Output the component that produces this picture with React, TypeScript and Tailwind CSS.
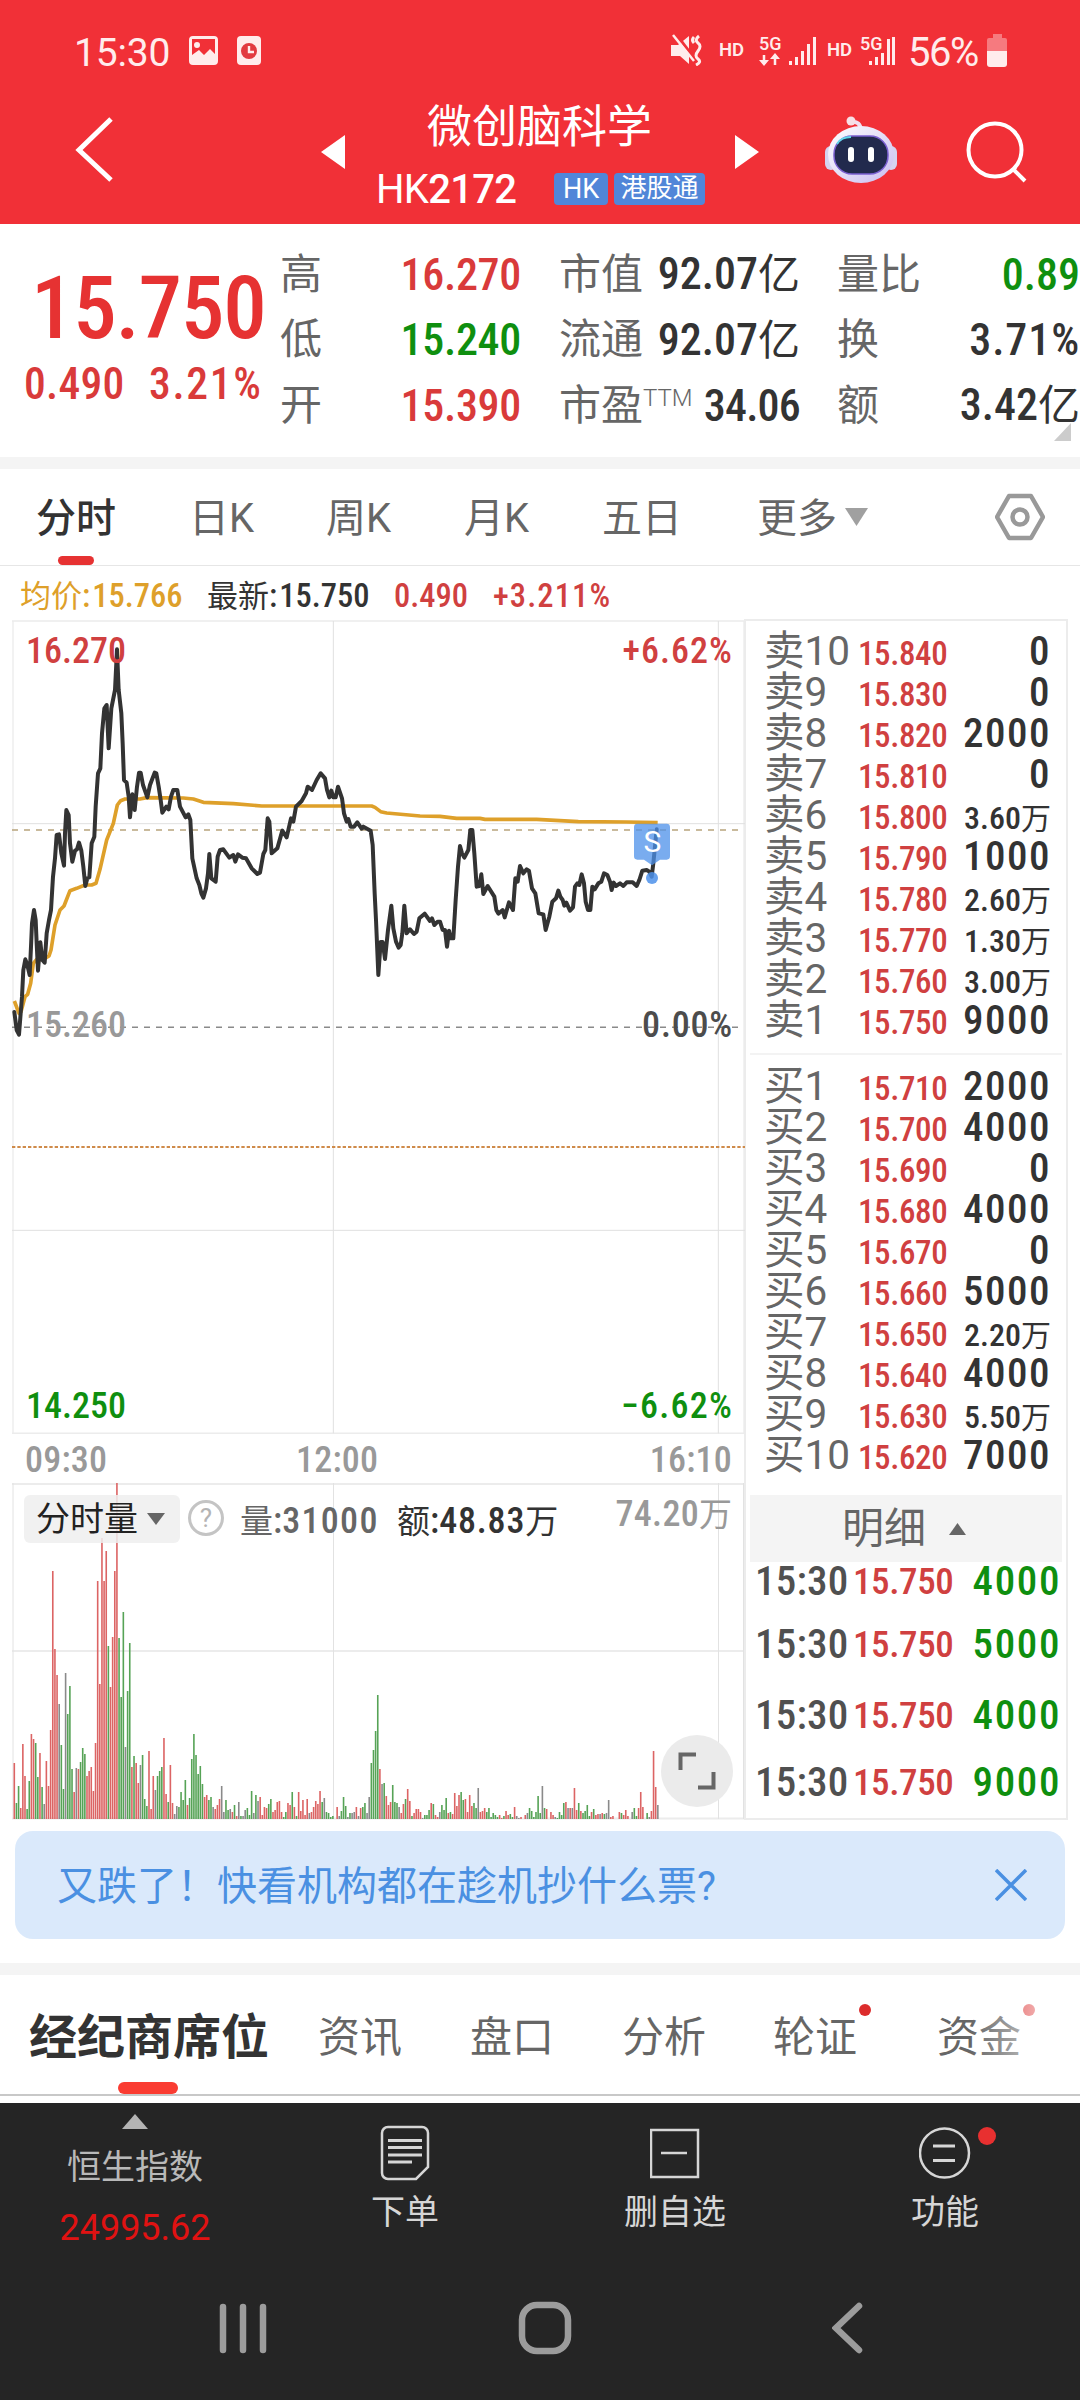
import React from 'react'

const red = 'text-[#d93a3a]'
const green = 'text-[#0f8f0f]'
const dark = 'text-[#333333]'

const quoteColumns = [
  {
    box: 'w-[241px] ml-[280px]',
    rows: [
      { label: '高', value: '16.270', color: red, fit: '-tracking-[0.3px]' },
      { label: '低', value: '15.240', color: green, fit: '-tracking-[0.3px]' },
      { label: '开', value: '15.390', color: red, fit: '-tracking-[0.3px]' }
    ]
  },
  {
    box: 'w-[241px] ml-[38px]',
    rows: [
      { label: '市值', value: '92.07亿', color: dark, fit: '' },
      { label: '流通', value: '92.07亿', color: dark, fit: '' },
      { label: '市盈', sup: 'TTM', value: '34.06', color: dark, fit: '-tracking-[0.8px]' }
    ]
  },
  {
    box: 'w-[243px] ml-[37px]',
    rows: [
      { label: '量比', value: '0.89', color: green, fit: '' },
      { label: '换', value: '3.71%', color: dark, fit: 'tracking-[0.9px]' },
      { label: '额', value: '3.42亿', color: dark, fit: '' }
    ]
  }
]

const sells = [
  ['卖10', '15.840', '0'],
  ['卖9', '15.830', '0'],
  ['卖8', '15.820', '2000'],
  ['卖7', '15.810', '0'],
  ['卖6', '15.800', '3.60万'],
  ['卖5', '15.790', '1000'],
  ['卖4', '15.780', '2.60万'],
  ['卖3', '15.770', '1.30万'],
  ['卖2', '15.760', '3.00万'],
  ['卖1', '15.750', '9000']
]

const buys = [
  ['买1', '15.710', '2000'],
  ['买2', '15.700', '4000'],
  ['买3', '15.690', '0'],
  ['买4', '15.680', '4000'],
  ['买5', '15.670', '0'],
  ['买6', '15.660', '5000'],
  ['买7', '15.650', '2.20万'],
  ['买8', '15.640', '4000'],
  ['买9', '15.630', '5.50万'],
  ['买10', '15.620', '7000']
]

const trades = [
  { time: '15:30', price: '15.750', volume: '4000', row: 'h-[38px]' },
  { time: '15:30', price: '15.750', volume: '5000', row: 'h-[88px]' },
  { time: '15:30', price: '15.750', volume: '4000', row: 'h-[53px]' },
  { time: '15:30', price: '15.750', volume: '9000', row: 'h-[82px]' }
]

// Plot units are a third of a pixel, both lines share the same viewBox
const priceLine =
  '43,1236 50,1290 57,1304 62,1240 66,1190 70,1110 76,1078 82,1095 89,1125 93,1040 96,970 102,930 107,960 110,1030 114,1112 121,1027 127,1080 134,1088 140,1000 147,960 153,930 159,830 165,775 170,705 177,703 184,760 192,797 195,700 199,630 206,645 210,730 217,785 225,752 231,748 237,728 244,752 250,800 256,858 262,835 268,832 275,730 283,710 287,620 294,520 301,505 306,400 313,325 320,315 326,445 334,325 345,270 351,148 356,270 364,340 368,430 372,540 380,548 386,590 390,652 397,583 404,630 411,560 417,518 422,518 429,555 442,592 450,555 464,518 469,520 476,560 482,600 487,638 499,620 506,628 513,590 520,570 532,570 540,620 557,652 565,643 571,660 577,775 590,835 598,855 604,880 610,893 618,865 624,820 628,762 634,835 647,845 653,770 660,750 670,748 688,773 700,765 706,785 714,763 727,773 738,775 755,805 772,822 780,818 790,762 796,750 803,655 808,665 815,760 832,745 847,692 860,712 873,655 880,665 888,620 905,603 918,580 923,560 936,570 950,540 962,520 975,535 981,570 988,592 994,572 1000,592 1007,592 1014,560 1026,595 1032,640 1040,665 1045,657 1052,680 1062,680 1072,667 1085,686 1090,680 1112,692 1118,735 1124,880 1128,960 1135,1125 1142,1026 1148,1026 1155,1077 1164,990 1174,917 1180,985 1188,1025 1196,1043 1202,1035 1207,1000 1213,917 1220,1000 1230,988 1242,1002 1250,995 1258,955 1274,941 1290,963 1296,955 1303,975 1313,965 1320,965 1328,990 1335,990 1341,1040 1347,992 1352,1015 1360,1015 1367,900 1374,800 1380,738 1386,760 1393,773 1405,750 1411,690 1417,690 1423,760 1430,860 1438,858 1444,823 1450,882 1463,858 1483,890 1489,930 1495,941 1508,930 1514,952 1527,907 1539,930 1546,835 1553,845 1560,798 1570,820 1580,808 1587,813 1596,865 1606,880 1616,940 1630,943 1637,990 1648,950 1657,905 1668,895 1675,872 1681,890 1688,900 1693,917 1699,908 1710,932 1719,922 1725,860 1732,850 1738,855 1745,823 1752,850 1757,905 1764,930 1771,930 1777,860 1784,868 1795,850 1804,845 1812,820 1822,825 1830,845 1835,870 1841,848 1848,858 1860,850 1870,858 1880,847 1898,847 1910,858 1918,840 1927,812 1940,810 1948,815 1955,830 1960,790 1970,688'

const averageLine =
  '43,1203 57,1240 63,1235 75,1190 83,1183 92,1150 100,1090 110,1078 130,1078 147,1068 153,1050 165,975 180,930 192,918 210,872 230,865 255,855 275,855 288,850 300,808 320,720 340,670 352,615 362,602 375,597 420,597 440,593 550,594 580,597 610,607 700,611 785,618 1115,618 1125,622 1142,635 1160,639 1260,648 1320,649 1370,655 1440,655 1455,658 1610,658 1735,665 1880,666 1973,668'

// One entry per minute: height in px and colour (r up, g down, n flat)
const volumes =
  '56r 16g 33g 11r 75r 43r 10g 38g 85r 80r 76g 42g 66r 32g 15n 58r 33r 89r 248r 170r 144r 115n 74g 30g 146n 105g 133g 50g 27r 51n 50r 57g 71g 65g 43r 48r 52r 28r 76r 238r 135r 281r 238r 268r 173g 132r 182r 248r 336r 181g 122g 207g 72n 128g 176g 52r 63g 56r 36r 54n 64g 20g 13g 68r 10r 43r 29n 43g 48g 52g 81r 25r 17g 54r 16r 5n 13n 12g 27g 19g 39g 14r 21g 60g 85g 64g 45g 53g 35g 22r 24r 19g 22g 12n 10r 14r 20r 33n 7n 19g 9g 10n 7r 14g 3r 17n 3g 3n 9n 11g 4g 28g 6n 24g 18n 22r 4r 12r 11r 15g 20g 7r 9r 17r 18r 7r 2g 7g 16r 14r 27g 12r 3g 27r 8r 19r 4r 20r 6n 7r 12r 18r 15r 28r 17g 21n 7g 6g 2g 3g 0n 12r 3n 8g 22g 13g 2n 6g 6n 7n 12r 3n 11r 12g 16g 6n 22n 56g 69g 88g 124g 50r 35n 36g 23r 14r 17r 34g 17g 16g 12n 6r 15r 20g 30r 18r 3g 6r 10r 10r 7r 1n 4g 4g 9g 16r 15g 4r 2r 7n 14g 9g 21g 6r 7g 5r 26r 13r 24r 27g 19g 20r 7r 24r 13r 16g 11g 31n 7r 8r 11r 7g 11g 2g 6g 4g 2g 4r 1r 3g 8r 4r 5g 2g 12r 3n 1n 2r 0n 4r 6n 11g 8g 2g 7g 23g 6g 33n 11g 10r 0n 7r 4r 2n 1g 7g 4g 16g 17r 11n 11r 11n 31r 9r 16g 8r 6g 8g 14g 3g 7r 10g 4r 5r 5n 6r 5g 6n 19n 2r 3r 0n 0n 7r 6g 4r 9r 3r 0n 7n 11g 3g 11r 27r 12r 0n 6g 2n 8r 68r 32r 14n'

const barFill: Record<string, string> = {
  r: '#dc6464',
  g: '#56a356',
  n: '#8a8a8a'
}

const StatusBar = () => (
  <div className="h-[102px] flex items-start pt-[31px] pl-[74px] text-[#ffecec]">
    <span className="text-[39px] leading-[44px] w-[115px] -tracking-[0.2px]">15:30</span>
    <svg className="mt-[5px]" width="29" height="29" viewBox="0 0 29 29">
      <path fillRule="evenodd" fill="currentColor" d="M4 0h21a4 4 0 0 1 4 4v21a4 4 0 0 1-4 4H4a4 4 0 0 1-4-4V4a4 4 0 0 1 4-4zM3 3v16l7-5 5 5 6-6 5 5V3zM8 6a3 3 0 1 1 0 6 3 3 0 0 1 0-6z" />
    </svg>
    <svg className="mt-[5px] ml-[19px]" width="24" height="29" viewBox="0 0 24 29">
      <rect width="24" height="29" rx="4" fill="currentColor" />
      <circle cx="12" cy="15" r="8" fill="#e23a40" />
      <path d="M12 10v6h5" fill="none" stroke="#ffecec" strokeWidth="2.4" />
    </svg>
    <svg className="ml-[410px] mt-[3px]" width="32" height="32" viewBox="0 0 32 32" fill="none" stroke="currentColor">
      <path d="M0 11h7l11-9v28L9 22H0z" fill="currentColor" stroke="none" />
      <path d="M5 0l18 24" stroke="#f13037" strokeWidth="3" />
      <path d="M2 1l21 26" strokeWidth="2.5" />
      <path d="M23 3q-3 3 0 6M28 2q-5 4-1 7t0 8 0 8-2 6" strokeWidth="3" />
    </svg>
    <span className="ml-[16px] mt-[9px] w-[40px] text-[18.5px] leading-[20px] font-semibold">HD</span>
    <svg className="mt-[4px] overflow-visible" width="60" height="32" viewBox="0 0 60 32" fill="currentColor">
      <text x="0" y="15" fontSize="18" fontWeight="500" fontFamily="Roboto">5G</text>
      <path d="M5 20v9M16 21v9" stroke="currentColor" strokeWidth="2.5" />
      <path d="M0 25h10l-5 6zM11 24h10l-5-6z" />
      <path d="M30 26h3v4h-3zM36 22h3v8h-3zM42 16h3v14h-3zM48 9h3v21h-3zM54 2h3v28h-3z" />
    </svg>
    <span className="ml-[8px] mt-[9px] w-[33px] text-[18.5px] leading-[20px] font-semibold">HD</span>
    <svg className="mt-[4px] overflow-visible" width="38" height="32" viewBox="0 0 38 32" fill="currentColor">
      <text x="0" y="15" fontSize="18" fontWeight="500" fontFamily="Roboto">5G</text>
      <path d="M9 26h3v4H9zM15 22h3v8h-3zM21 18h3v12h-3zM27 4h3v26h-3zM32 2h3v28h-3z" />
    </svg>
    <span className="ml-[10px] text-[40px] leading-[44px] w-[79px] -tracking-[1.5px]">56%</span>
    <svg className="mt-[3px]" width="20" height="33" viewBox="0 0 20 33" fill="#ffecec">
      <path opacity=".4" d="M6 0h9v4h3a2 2 0 0 1 2 2v11H0V6a2 2 0 0 1 2-2h4z" />
      <path d="M0 17h20v13a3 3 0 0 1-3 3H3a3 3 0 0 1-3-3z" />
    </svg>
  </div>
)

const RobotIcon = () => (
  <svg className="ml-[66px] mt-[14px]" width="72" height="68" viewBox="0 0 72 68">
    <defs>
      <linearGradient id="shell" x1="0" y1="0" x2="1" y2="1">
        <stop offset="0" stopColor="#ffffff" />
        <stop offset="1" stopColor="#c9bdf0" />
      </linearGradient>
    </defs>
    <path d="M36 14Q35 5 27 6" fill="none" stroke="#f1dff0" strokeWidth="4" />
    <circle cx="26" cy="5" r="4.5" fill="#f7dfe6" />
    <rect x="0" y="30" width="12" height="24" rx="6" fill="#d5d3f0" />
    <rect x="60" y="30" width="12" height="24" rx="6" fill="#d5d3f0" />
    <ellipse cx="36" cy="38.500" rx="33" ry="28.500" fill="url(#shell)" />
    <rect x="9" y="20" width="54" height="38" rx="18" fill="#222a4d" stroke="#7a5fd0" strokeWidth="1.5" />
    <path d="M12 28Q16 21 26 21" stroke="#5fd6e8" strokeWidth="2" fill="none" />
    <rect x="23" y="31" width="6" height="15" rx="3" fill="#fff" />
    <rect x="43" y="31" width="6" height="15" rx="3" fill="#fff" />
  </svg>
)

const Header = () => (
  <div className="h-[122px] flex items-start text-white">
    <svg className="ml-[74px] mt-[15px]" width="40" height="66" viewBox="0 0 40 66" fill="none" stroke="#fff" strokeWidth="5">
      <path d="M37 2L5 33l32 30" />
    </svg>
    <svg className="ml-[207px] mt-[33px]" width="24" height="34" viewBox="0 0 24 34" fill="#fff">
      <path d="M24 0v34L0 17z" />
    </svg>
    <div className="w-[390px]">
      <div className="text-[45px] leading-[52px] text-center -ml-[1px]">微创脑科学</div>
      <div className="flex items-center h-[34px] mt-[18px] pl-[31px] gap-1.5">
        <span className="text-[40px] leading-[36px] w-[172px] -tracking-[0.7px] pt-[1px]">
          HK<span className="font-medium">2172</span>
        </span>
        <span className="h-[32px] w-[54px] rounded-sm bg-[#5186d8] text-[27px] leading-[32px] text-center">HK</span>
        <span className="h-[32px] w-[91px] rounded-sm bg-[#5186d8] text-[26px] leading-[31px] text-center">港股通</span>
      </div>
    </div>
    <svg className="mt-[33px]" width="24" height="34" viewBox="0 0 24 34" fill="#fff">
      <path d="M0 0v34l24-17z" />
    </svg>
    <RobotIcon />
    <svg className="ml-[68px] mt-[18px]" width="64" height="64" viewBox="0 0 64 64" fill="none" stroke="#fff" strokeWidth="4">
      <circle cx="30" cy="30" r="26.500" />
      <path d="M48 49l12 12" />
    </svg>
  </div>
)

const Quote = () => (
  <div className="relative h-[233px] flex pt-[18px]">
    <div className="absolute left-[31px] top-[32px] font-['Roboto_Condensed'] font-medium text-[87px] leading-[104px] -tracking-[1.2px] text-[#e63232]">15.750</div>
    <div className="absolute left-[24px] top-[136px] flex font-['Roboto_Condensed'] font-medium text-[43.5px] leading-[50px] text-[#d93a3a]">
      <span className="w-[125px] tracking-[0.3px]">0.490</span>
      <span className="tracking-[1.7px]">3.21%</span>
    </div>
    {quoteColumns.map((col, i) => (
      <div key={i} className={`${col.box} shrink-0`}>
        {col.rows.map((row) => (
          <div key={row.label} className="h-[65.5px] flex items-center justify-between whitespace-nowrap">
            <span className="text-[42px] leading-[50px] text-[#666666]">
              {row.label}
              {row.sup && <sup className="text-[24px] font-light -top-[14px] leading-none">{row.sup}</sup>}
            </span>
            <span className={`font-['Roboto_Condensed','Noto_Sans_CJK_SC'] text-[44px] leading-[50px] font-medium ${row.color} ${row.fit}`}>
              {row.value.replace('亿', '')}
              {row.value.includes('亿') && <span className="text-[42px] font-normal">亿</span>}
            </span>
          </div>
        ))}
      </div>
    ))}
    <svg className="absolute left-[1054px] top-[199px]" width="17" height="18" viewBox="0 0 17 18" fill="#cccccc">
      <path d="M17 0v18H0z" />
    </svg>
  </div>
)

const PeriodTabs = () => (
  <div className="relative h-[97px] flex border-b border-[#e6e6e6] text-[40px] leading-[99px] text-[#666666]">
    <span className="ml-[36px] w-[153px] font-medium text-[#333333]">分时</span>
    <span className="w-[137px]">日K</span>
    <span className="w-[138px]">周K</span>
    <span className="w-[138px]">月K</span>
    <span className="w-[155px]">五日</span>
    <span>更多</span>
    <svg className="ml-[8px] mt-[39px]" width="23" height="18" viewBox="0 0 23 18" fill="#a0a0a0">
      <path d="M0 0h23L11.500 18z" />
    </svg>
    <svg className="ml-[127px] mt-[24px]" width="50" height="48" viewBox="0 0 50 48" fill="none" stroke="#999" strokeWidth="4.500" strokeLinejoin="round">
      <path d="M14 3h22l12 21-12 21H14L2 24z" />
      <circle cx="25" cy="24" r="7.500" />
    </svg>
    <div className="absolute left-[58px] bottom-0 w-[36px] h-[9px] rounded-full bg-[#e63232]"></div>
  </div>
)

const PriceChart = () => (
  <div className="relative h-[814px]">
    <svg className="block" width="733" height="814" viewBox="36 60 2199 2442" fill="none">
      <g stroke="#ececec" strokeWidth="5">
        <path d="M36 63H2235M36 2500H2235" />
        <path d="M39 63V2500M2232 63V2500" strokeWidth="4" />
        <path d="M36 671H2235M36 1891H2235M1000 63V2500M2155 63V2500" stroke="#e0e0e0" strokeWidth="3" />
      </g>
      <path d="M36 690H2220" stroke="#b8a47c" strokeWidth="5" strokeDasharray="18 18" />
      <path d="M36 1282H2220" stroke="#8a8a8a" strokeWidth="4.500" strokeDasharray="18 18" />
      <path d="M36 1641H2235" stroke="#cf8b4a" strokeWidth="6" strokeDasharray="10 6" />
      <polyline points={averageLine} stroke="#dea02a" strokeWidth="11" strokeLinejoin="round" />
      <polyline points={priceLine} stroke="#333333" strokeWidth="12" strokeLinejoin="round" strokeLinecap="round" />
      <g fill="#4c90ea">
        <path opacity=".75" d="M1912 671h88a10 10 0 0 1 10 10v88a10 10 0 0 1-10 10h-20l-24 17-24-17h-20a10 10 0 0 1-10-10v-88a10 10 0 0 1 10-10z" />
        <circle opacity=".85" cx="1956" cy="834" r="18" />
      </g>
      <text x="1957" y="756" textAnchor="middle" fontFamily="Roboto" fontSize="90" fill="#fff">S</text>
    </svg>
    <div className="absolute inset-0 px-[14px] pr-[11px] font-['Roboto_Condensed'] font-medium text-[36px] leading-[40px]">
      <div className="flex justify-between pt-[11px] text-[#d04040]">
        <span>16.270</span>
        <span className="tracking-[1px]">+6.62%</span>
      </div>
      <div className="flex justify-between pt-[334px] text-[#4c4c4c]">
        <span className="text-[#999999]">15.260</span>
        <span className="tracking-[0.8px]">0.00%</span>
      </div>
      <div className="flex justify-between pt-[341px] text-[#0f8f0f]">
        <span>14.250</span>
        <span className="tracking-[1.2px]">−6.62%</span>
      </div>
    </div>
  </div>
)

const VolumeChart = () => (
  <div className="relative h-[337px]">
    <svg className="block" width="733" height="337" viewBox="0 0 733 337">
      <path d="M0 1H733M0 168H733M0 335.500H733" stroke="#ececec" strokeWidth="2" />
      <path d="M1 0V336M731.500 0V336M321.500 0V336M706.500 0V336" stroke="#e2e2e2" strokeWidth="1" />
      {volumes.split(' ').map((v, i) => {
        const h = parseInt(v)
        return <rect key={i} x={1.5 + i * 2.138} y={336 - h} width="1.6" height={h} fill={barFill[v.slice(-1)]} />
      })}
    </svg>
    <div className="absolute left-[12px] top-[12px] w-[156px] h-[48px] rounded-md bg-[#eeeeee]/85 flex items-center pl-[12px] text-[34px] leading-[50px] text-[#222222]">
      分时量
      <svg className="ml-[9px]" width="18" height="12" viewBox="0 0 18 12" fill="#666">
        <path d="M0 0h18L9 12z" />
      </svg>
    </div>
    <div className="absolute left-[176px] top-[17px] w-[36px] h-[36px] rounded-full border-[3px] border-[#c4c4c4] text-[#b4b4b4] text-[26px] leading-[31px] text-center">?</div>
    <div className="absolute left-[228px] top-[16px] flex font-['Roboto_Condensed','Noto_Sans_CJK_SC'] font-medium text-[36px] leading-[44px] text-[#666666]">
      <span className="w-[157px]">
        <span className="text-[33px] font-normal">量</span>:<span className="tracking-[1.3px]">31000</span>
      </span>
      <span className="text-[#333333]">
        <span className="text-[33px] font-normal">额</span>:<span className="tracking-[0.8px]">48.83</span>
        <span className="text-[33px] font-normal">万</span>
      </span>
    </div>
    <div className="absolute right-[12px] top-[9px] font-['Roboto_Condensed','Noto_Sans_CJK_SC'] font-medium text-[36px] leading-[44px] text-[#999999]">
      <span className="tracking-[0.3px]">74.20</span>
      <span className="text-[33px] font-normal">万</span>
    </div>
    <svg className="absolute left-[649px] top-[252px]" width="72" height="72" viewBox="0 0 72 72">
      <circle cx="36" cy="36" r="36" fill="#ebebeb" />
      <path d="M19.500 35V19.500H35M37 52.500h15.500V37" fill="none" stroke="#666" strokeWidth="4" />
    </svg>
  </div>
)

const BookRow = ({ row }: { row: string[] }) => (
  <div className="h-[41px] flex items-baseline leading-[41px] whitespace-nowrap">
    <span className="w-[94px] text-[40.5px] text-[#666666]">{row[0]}</span>
    <span className="font-['Roboto_Condensed'] font-medium text-[33px] -tracking-[0.4px] text-[#d04040]">{row[1]}</span>
    {row[2].includes('万') ? (
      <span className="ml-auto font-['Roboto_Condensed'] font-medium text-[32px] text-[#333333]">
        {row[2].replace('万', '')}
        <span className="font-['Noto_Sans_CJK_SC'] font-normal text-[30px] leading-none">万</span>
      </span>
    ) : (
      <span className="ml-auto font-['Roboto_Condensed'] font-medium text-[41px] tracking-[1.5px] text-[#333333]">{row[2]}</span>
    )}
  </div>
)

const OrderBook = () => (
  <div className="w-[324px] h-[1201px] -mt-[1px] border-2 border-[#ececec]">
    <div className="pt-[10px] pl-[18px] pr-[15px]">
      {sells.map((row) => (
        <BookRow key={row[0]} row={row} />
      ))}
    </div>
    <div className="mx-[4px] mt-[12px] h-[2px] bg-[#f3f3f3]"></div>
    <div className="pt-[11px] pl-[18px] pr-[15px]">
      {buys.map((row) => (
        <BookRow key={row[0]} row={row} />
      ))}
    </div>
    <div className="mx-[4px] mt-[19px] h-[67px] bg-[#f4f4f4] flex items-center pl-[92px] text-[42px] leading-[71px] text-[#666666]">
      明细
      <svg className="ml-[23px]" width="17" height="12" viewBox="0 0 17 12" fill="#666">
        <path d="M0 12h17L8.500 0z" />
      </svg>
    </div>
    {trades.map((t, i) => (
      <div key={i} className={`${t.row} flex items-center pl-[9px] pr-[5px] font-['Roboto_Condensed'] font-medium leading-[36px]`}>
        <span className="w-[98px] text-[41px] tracking-[0.2px] text-[#505050]">{t.time}</span>
        <span className="text-[37px] -tracking-[0.4px] pt-[2px] text-[#d04040]">{t.price}</span>
        <span className="ml-auto text-[41px] tracking-[1.6px] text-[#0f8f0f]">{t.volume}</span>
      </div>
    ))}
  </div>
)

const SectionTabs = () => (
  <div className="relative h-[121px] flex border-b-2 border-[#c8c8c8] text-[42px] leading-[125px] text-[#666666]">
    <span className="ml-[29px] w-[289px] text-[48px] font-bold text-[#333333]">经纪商席位</span>
    <span className="w-[152px]">资讯</span>
    <span className="w-[152px]">盘口</span>
    <span className="w-[151px]">分析</span>
    <span className="w-[164px] relative">
      轮证
      <i className="absolute left-[86px] top-[29px] w-[12px] h-[12px] rounded-full bg-[#dc2c2c]"></i>
    </span>
    <span className="relative">
      资金
      <i className="absolute left-[86px] top-[29px] w-[12px] h-[12px] rounded-full bg-[#dc2c2c]"></i>
    </span>
    <div className="absolute right-0 top-0 h-[110px] w-[110px] bg-gradient-to-r from-white/0 to-white"></div>
    <div className="absolute left-[118px] bottom-0 w-[60px] h-[12px] rounded-full bg-[#fa3c32]"></div>
  </div>
)

const BottomBar = () => (
  <div className="h-[297px] bg-[#252525] text-[#d6d6d6]">
    <div className="h-[170px] grid grid-cols-4 text-[34px] leading-[40px] text-center">
      <div className="text-[#b9b9b9]">
        <svg className="mx-auto mt-[11px]" width="26" height="15" viewBox="0 0 26 15" fill="#b4b4b4">
          <path d="M0 15h26L13 0z" />
        </svg>
        <div className="mt-[18px]">恒生指数</div>
        <div className="mt-[21px] text-[36px] text-[#e01212]">24995.62</div>
      </div>
      <div>
        <svg className="mx-auto mt-[22px]" width="50" height="56" viewBox="0 0 50 56" fill="none" stroke="#d6d6d6" strokeWidth="2.500">
          <path d="M8 2h34a6 6 0 0 1 6 6v34L36 54H8a6 6 0 0 1-6-6V8a6 6 0 0 1 6-6z" />
          <path d="M8 15.500h34M8 22.500h34M8 30h34M8 37h24" strokeWidth="3" />
        </svg>
        <div className="mt-[11px]">下单</div>
      </div>
      <div>
        <svg className="mx-auto mt-[22px]" width="50" height="56" viewBox="0 0 50 56" fill="none" stroke="#d6d6d6" strokeWidth="2.500">
          <path d="M1 5h47v47H1zM11 28h26" />
        </svg>
        <div className="mt-[11px]">删自选</div>
      </div>
      <div className="relative">
        <svg className="mx-auto mt-[22px]" width="52" height="56" viewBox="0 0 52 56" fill="none" stroke="#d6d6d6" strokeWidth="2.500">
          <circle cx="25.500" cy="28" r="24.500" />
          <path d="M14 21h22M14 35.500h22" strokeWidth="3" />
        </svg>
        <div className="mt-[11px]">功能</div>
        <i className="absolute left-[168px] top-[24px] w-[18px] h-[18px] rounded-full bg-[#e83030]"></i>
      </div>
    </div>
    <div className="flex items-center pt-[28px] pl-[219px]">
      <svg width="48" height="52" viewBox="0 0 48 52" stroke="#9c9c9c" strokeWidth="6.500" strokeLinecap="round">
        <path d="M4 5v43M24 5v43M44 5v43" />
      </svg>
      <svg className="ml-[251px]" width="54" height="54" viewBox="0 0 54 54" fill="none" stroke="#9c9c9c" strokeWidth="6.500">
        <rect x="4" y="4" width="46" height="46" rx="15" />
      </svg>
      <svg className="ml-[260px]" width="32" height="52" viewBox="0 0 32 52" fill="none" stroke="#9c9c9c" strokeWidth="6.500" strokeLinecap="round">
        <path d="M27 4L4 26l23 22" />
      </svg>
    </div>
  </div>
)

export default function App() {
  return (
    <div className="w-[1080px] h-[2400px] overflow-hidden bg-white font-['Roboto','Noto_Sans_CJK_SC',sans-serif]">
      <div className="bg-[#f13037]">
        <StatusBar />
        <Header />
      </div>
      <Quote />
      <div className="h-[12px] bg-[#f4f4f4]"></div>
      <PeriodTabs />

      {/* Average / last price line */}
      <div className="h-[54px] flex pl-[20px] font-['Roboto_Condensed','Noto_Sans_CJK_SC'] font-medium text-[32.5px] leading-[61px] text-[#d04040]">
        <span className="w-[187px] text-[#dea02a]">
          <span className="text-[31px] font-normal">均价</span>:<span className="ml-[2px]">15.766</span>
        </span>
        <span className="w-[187px] text-[#333333]">
          <span className="text-[31px] font-normal">最新</span>:<span className="ml-[2px]">15.750</span>
        </span>
        <span className="w-[99px]">0.490</span>
        <span className="tracking-[1.1px]">+3.211%</span>
      </div>

      {/* Charts and order book */}
      <div className="flex h-[1200px] pl-[12px]">
        <div className="w-[732px]">
          <PriceChart />
          <div className="h-[49px] flex pl-[13px] pr-[12px] font-['Roboto_Condensed'] font-medium text-[36px] leading-[52px] tracking-[0.2px] text-[#999999]">
            <span className="w-[271px]">09:30</span>
            <span>12:00</span>
            <span className="ml-auto">16:10</span>
          </div>
          <VolumeChart />
        </div>
        <OrderBook />
      </div>

      {/* Notice */}
      <div className="mx-[15px] mt-[11px] h-[108px] rounded-[18px] bg-[#dae9fb] flex items-center justify-between pl-[42px] pr-[38px] text-[40px] leading-[60px] text-[#4a90e2]">
        <span className="pt-[3px]">又跌了！快看机构都在趁机抄什么票?</span>
        <svg width="32" height="32" viewBox="0 0 32 32" stroke="#4a90e2" strokeWidth="3.500">
          <path d="M1 1l30 30M31 1L1 31" />
        </svg>
      </div>
      <div className="mt-[24px] h-[12px] bg-[#f4f4f4]"></div>
      <SectionTabs />
      <div className="h-[7px]"></div>
      <BottomBar />
    </div>
  )
}
